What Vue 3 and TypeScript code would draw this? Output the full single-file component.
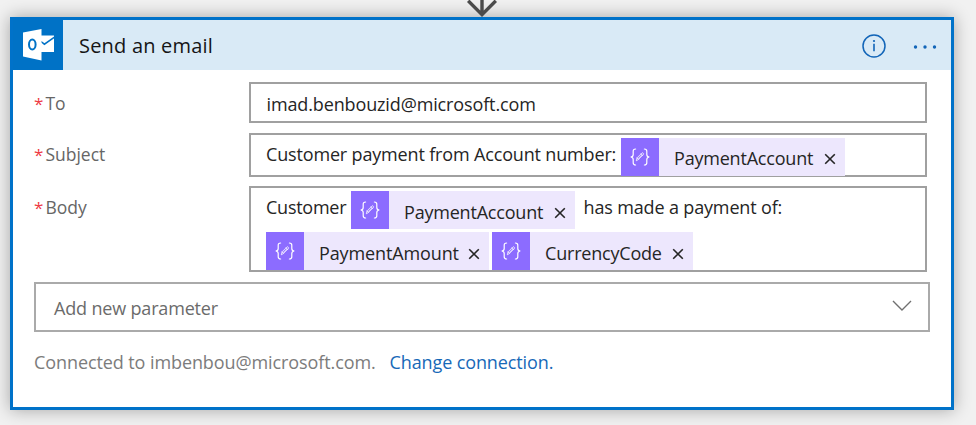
<script setup lang="ts">
import { defineComponent, h } from 'vue'

interface Token {
  name: string
  kind: string
}

const account: Token = { name: 'PaymentAccount', kind: 'account' }
const amount: Token = { name: 'PaymentAmount', kind: 'amount' }
const currency: Token = { name: 'CurrencyCode', kind: 'currency' }

const stroke = { fill: 'none', stroke: 'currentColor', 'stroke-linecap': 'round', 'stroke-linejoin': 'round' }

const BracesIcon = defineComponent(() => () =>
  h('svg', { width: 20, height: 18, viewBox: '0 0 20 18', ...stroke }, [
    h('path', { 'stroke-width': 1.2, d: 'M5.6 1C3.8 1 3.2 1.8 3.2 3.2v3.2C3.2 7.8 2.6 8.7 1 9c1.6.3 2.2 1.2 2.2 2.6v3.2c0 1.4.6 2.2 2.4 2.2M14.4 1c1.8 0 2.4.8 2.4 2.2v3.2c0 1.4.6 2.3 2.2 2.6-1.6.3-2.2 1.2-2.2 2.6v3.2c0 1.4-.6 2.2-2.4 2.2' }),
    h('path', { 'stroke-width': 0.75, d: 'M6.4 12.4l.6-2.5 5-5c.6-.6 2.1.8 1.5 1.5l-5 5zM7 9.9l1.5 1.5M11 5.9l1.5 1.5M8.3 10.5l3.5-3.5' }),
  ]),
)

const CloseIcon = defineComponent(() => () =>
  h('svg', { width: 12, height: 12, viewBox: '0 0 12 12', ...stroke }, [
    h('path', { 'stroke-width': 1.6, 'stroke-linecap': 'butt', d: 'M1.2 1.2l9.6 9.6M10.8 1.2l-9.6 9.6' }),
  ]),
)
</script>

<template>
  <main class="canvas">
    <svg class="arrow" width="32" height="17" viewBox="0 0 32 17">
      <path d="M16 0v15M2.2 0.8L16 14.6L29.8 0.8" fill="none" stroke="#4b4b4b" stroke-width="3.4" />
    </svg>
    <section class="card">
      <header class="header">
        <div class="logo">
          <svg width="32" height="32" viewBox="0 0 32 32">
            <path d="M18 6.500h13v16.500H18z" fill="#fff" />
            <path d="M18 12.500l3.400 2.700L31.500 8.200" fill="none" stroke="#0072c6" stroke-width="1.500" />
            <path d="M0 3.500L18.500 0v31.500L0 27.500z" fill="#fff" />
            <ellipse cx="9.300" cy="15.500" rx="3.300" ry="4.900" fill="none" stroke="#0072c6" stroke-width="2" />
          </svg>
        </div>
        <h1 class="title">Send an email</h1>
        <svg class="info" width="24" height="24" viewBox="0 0 24 24">
          <circle cx="12" cy="12" r="11" fill="none" stroke="#1265b8" stroke-width="1.500" />
          <path d="M12 9.800v7.400" stroke="#1265b8" stroke-width="1.600" />
          <circle cx="12" cy="7" r="1.100" fill="#1265b8" />
        </svg>
        <svg class="more" width="24" height="4" viewBox="0 0 24 4">
          <circle cx="2.500" cy="2" r="1.700" fill="#1265b8" />
          <circle cx="12" cy="2" r="1.700" fill="#1265b8" />
          <circle cx="21.500" cy="2" r="1.700" fill="#1265b8" />
        </svg>
      </header>

      <div class="form">
        <div class="row row-to">
          <label class="label"><span class="star">*</span>To</label>
          <div class="field"><span class="text w-mail">imad.benbouzid@microsoft.com</span></div>
        </div>
        <div class="row row-subject">
          <label class="label"><span class="star">*</span>Subject</label>
          <div class="field">
            <span class="text w-subject">Customer payment from Account number:</span>
            <span class="chip">
              <span class="glyph"><BracesIcon /></span>
              <span class="name" :class="account.kind">{{ account.name }}</span>
              <CloseIcon />
            </span>
          </div>
        </div>
        <div class="row row-body">
          <label class="label"><span class="star">*</span>Body</label>
          <div class="field lines">
            <div class="line">
              <span class="text w-customer">Customer</span>
              <span class="chip">
                <span class="glyph"><BracesIcon /></span>
                <span class="name" :class="account.kind">{{ account.name }}</span>
                <CloseIcon />
              </span>
              <span class="text w-made">has made a payment of:</span>
            </div>
            <div class="line">
              <span v-for="t in [amount, currency]" :key="t.name" class="chip">
                <span class="glyph"><BracesIcon /></span>
                <span class="name" :class="t.kind">{{ t.name }}</span>
                <CloseIcon />
              </span>
            </div>
          </div>
        </div>
        <div class="select">
          <span class="placeholder">Add new parameter</span>
          <svg width="20" height="12" viewBox="0 0 20 12">
            <path d="M1 1l9 9 9-9" fill="none" stroke="#707070" stroke-width="1.400" />
          </svg>
        </div>
        <footer class="footer">
          <span class="connected">Connected to imbenbou@microsoft.com.</span>
          <a class="change">Change connection.</a>
        </footer>
      </div>
    </section>
  </main>
</template>

<style>
body {
  background: #f1f1f1;
}
</style>

<style scoped>
.canvas {
  box-sizing: border-box;
  width: 976px;
  height: 425px;
  overflow: hidden;
  display: flex;
  flex-direction: column;
  font-family: "Segoe UI", "Open Sans", "Noto Sans", sans-serif;
  font-size: 18px;
  line-height: 26px;
  color: #252525;
  background: #f1f1f1;
  white-space: nowrap;
}
.arrow {
  display: block;
  flex: none;
  margin-left: 466px;
  position: relative;
  z-index: 1;
}
.card {
  box-sizing: border-box;
  width: 944px;
  height: 393px;
  flex: none;
  margin-left: 10px;
  border: 3px solid #0072c9;
  background: #fff;
  box-shadow: 0 0 16px rgba(0, 0, 0, 0.32);
}
.header {
  display: flex;
  align-items: center;
  height: 50px;
  background: #d9eaf6;
}
.logo {
  width: 50px;
  height: 50px;
  display: flex;
  align-items: center;
  justify-content: center;
  background: #0072c6;
}
.logo svg {
  margin-left: 1px;
}
.title {
  margin: 2px auto 0 16px;
  font-size: 20px;
  font-weight: 400;
  color: #151515;
  letter-spacing: 0.2px;
}
.info {
  margin: 2px 27px 0 0;
}
.more {
  margin: 3px 14px 0 0;
}
.form {
  padding: 12px 20px 0 21px;
}
.row {
  display: flex;
}
.row-to {
  height: 41px;
  margin-bottom: 9.500px;
}
.row-subject {
  height: 44px;
  margin-bottom: 9.500px;
}
.row-body {
  height: 86px;
  margin-bottom: 9.500px;
}
.label {
  width: 215px;
  flex: none;
  color: #666;
  font-size: 17.500px;
  padding-top: 8px;
}
.star {
  color: #ee3a43;
  font-size: 17px;
  line-height: 1;
  margin-right: 2px;
}
.field {
  box-sizing: border-box;
  width: 678px;
  display: flex;
  padding-left: 15px;
  border: 2px solid #a0a0a0;
}
.text {
  flex: none;
  margin-top: 6px;
}
.w-mail {
  width: 270px;
  margin-left: 0.500px;
  margin-top: 7px;
  letter-spacing: -0.130px;
}
.w-subject {
  width: 355px;
  letter-spacing: -0.160px;
}
.w-customer {
  width: 85px;
  letter-spacing: -0.250px;
}
.w-made {
  margin-left: 9px;
  letter-spacing: -0.150px;
}
.chip {
  display: flex;
  align-items: center;
  height: 38px;
  margin-top: 3px;
  padding-right: 9px;
  background: #ede7fd;
}
.chip > svg {
  margin-top: 5px;
}
.glyph {
  width: 37.500px;
  height: 38px;
  display: flex;
  align-items: center;
  justify-content: center;
  color: #fff;
  background: #8c6cff;
}
.name {
  margin-left: 15.500px;
  padding-top: 3px;
  letter-spacing: -0.200px;
}
.account {
  width: 149.500px;
}
.amount {
  width: 149px;
  letter-spacing: -0.120px;
}
.currency {
  width: 126.500px;
}
.lines {
  flex-direction: column;
}
.line {
  display: flex;
  height: 41px;
}
.line + .line .chip + .chip {
  margin-left: 3px;
}
.select {
  box-sizing: border-box;
  width: 896px;
  height: 50px;
  display: flex;
  align-items: center;
  justify-content: space-between;
  padding: 1px 16px 0 18px;
  border: 2px solid #aaa;
  color: #6b6b6b;
}
.placeholder {
  margin-top: 1px;
  letter-spacing: -0.170px;
}
.select svg {
  margin-top: -3px;
}
.footer {
  display: flex;
  margin-top: 17.500px;
}
.connected {
  width: 355.500px;
  color: #7c7c7c;
  letter-spacing: -0.090px;
}
.change {
  color: #1769b8;
  letter-spacing: -0.110px;
}
</style>
